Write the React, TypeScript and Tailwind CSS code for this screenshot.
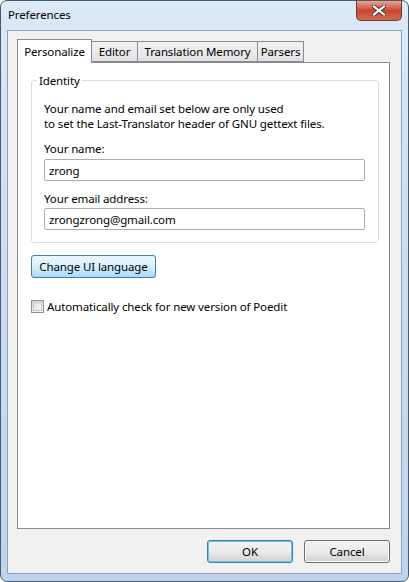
export default function App() {
  return (
    <div className="w-[409px] h-[582px] font-['Noto_Sans',sans-serif] text-[11.5px] tracking-[-0.12px] leading-[15px] text-black">
      <div className="w-[409px] h-[582px] rounded-[7px] border border-[#4b5a6b] bg-gradient-to-b from-[#dce9f7] via-[#c9dcf1] to-[#bed4ee] flex flex-col">
        {/* title bar */}
        <div className="h-[29px] flex items-start justify-between">
          <div className="pl-[7px] pt-[6px]">Preferences</div>
          <div className="mr-[6px] w-[46px] h-[20px] rounded-b-[5px] border border-t-0 border-[#6d3a35] bg-gradient-to-b from-[#e8a493] via-[#c9462e] to-[#d06a52] flex items-center justify-center">
            <svg width="14" height="11" viewBox="0 0 14 11">
              <path d="M2 1.5 L12 9.5 M12 1.5 L2 9.5" stroke="#3a3a3a" strokeWidth="4" strokeLinecap="square" />
              <path d="M2 1.5 L12 9.5 M12 1.5 L2 9.5" stroke="#ffffff" strokeWidth="2.2" strokeLinecap="square" />
            </svg>
          </div>
        </div>

        {/* client */}
        <div className="mx-[6px] flex-1 mb-[7px] border border-[#8ea2b8] bg-[#f0f0f0] flex flex-col pl-[9px] pr-[11px] pt-[7px]">
          {/* tabs */}
          <div className="flex items-end h-[24px]">
            <div className="w-[75px] h-[24px] border border-b-0 border-[#898c95] bg-white -mb-px relative z-10 flex items-center justify-center">Personalize</div>
            <div className="w-[46px] h-[21px] border border-l-0 border-[#898c95] bg-gradient-to-b from-[#f2f2f2] to-[#e2e2e2] flex items-center justify-center">Editor</div>
            <div className="w-[120px] h-[21px] border border-l-0 border-[#898c95] bg-gradient-to-b from-[#f2f2f2] to-[#e2e2e2] flex items-center justify-center">Translation Memory</div>
            <div className="w-[46px] h-[21px] border border-l-0 border-[#898c95] bg-gradient-to-b from-[#f2f2f2] to-[#e2e2e2] flex items-center justify-center">Parsers</div>
          </div>

          {/* panel */}
          <div className="h-[467px] border border-[#898c95] bg-white pl-[13px] pr-[10px] pt-[17px]">
            <div className="relative border border-[#d5dfe5] rounded-[3px] pl-[12px] pr-[13px] pt-[20px] pb-[12px]">
              <div className="absolute left-[5px] -top-[8px] bg-white px-[2px]">Identity</div>
              <div>Your name and email set below are only used</div>
              <div>to set the Last-Translator header of GNU gettext files.</div>
              <div className="mt-[10px]">Your name:</div>
              <div className="mt-[3px] h-[22px] border border-[#abadb3] rounded-[2px] px-[4px] flex items-center">zrong</div>
              <div className="mt-[10px]">Your email address:</div>
              <div className="mt-[2px] h-[22px] border border-[#abadb3] rounded-[2px] px-[4px] flex items-center">zrongzrong@gmail.com</div>
            </div>

            <button className="mt-[12px] h-[23px] w-[125px] rounded-[3px] border border-[#3c7fb1] bg-gradient-to-b from-[#eaf6fd] via-[#d9f0fc] to-[#a7d9f5] flex items-center justify-center">
              Change UI language
            </button>

            <div className="mt-[21px] flex items-center gap-[3px]">
              <div className="w-[13px] h-[13px] border border-[#8f8f8f] bg-gradient-to-br from-[#d9d9d9] to-[#f6f6f6] flex items-center justify-center">
                <div className="w-[9px] h-[9px] border border-[#c9c9c9] bg-gradient-to-br from-[#dcdcdc] to-[#fbfbfb]" />
              </div>
              <div>Automatically check for new version of Poedit</div>
            </div>
          </div>

          {/* buttons */}
          <div className="flex justify-end gap-[11px] mt-[11px]">
            <button className="h-[23px] w-[86px] rounded-[3px] border border-[#3c7fb1] bg-gradient-to-b from-[#f2f2f2] via-[#ebebeb] to-[#cfcfcf] shadow-[inset_0_0_0_1px_#6ec1ea] flex items-center justify-center">
              OK
            </button>
            <button className="h-[23px] w-[86px] rounded-[3px] border border-[#707070] bg-gradient-to-b from-[#f2f2f2] via-[#ebebeb] to-[#cfcfcf] shadow-[inset_0_0_0_1px_#fcfcfc] flex items-center justify-center">
              Cancel
            </button>
          </div>
        </div>
      </div>
    </div>
  );
}
